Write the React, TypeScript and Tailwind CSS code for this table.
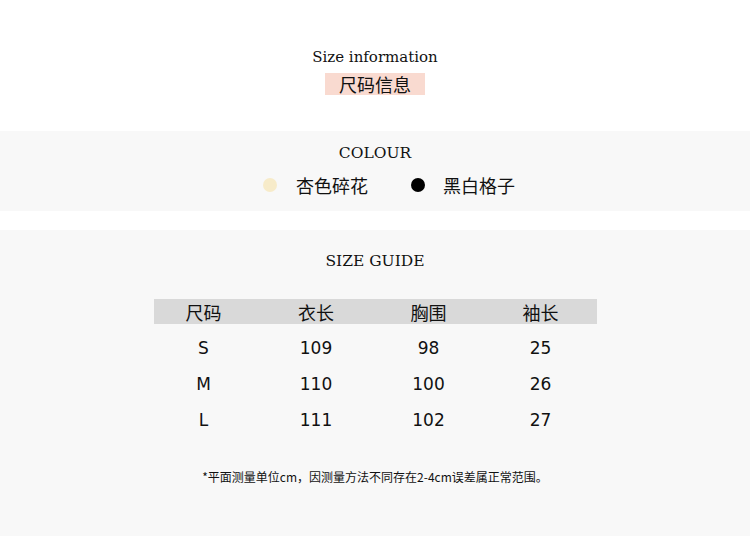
import React from "react";

const cjk = { fontFamily: '"Noto Sans CJK SC", "Noto Sans", sans-serif' };
const num = { fontFamily: '"DejaVu Sans", "Noto Sans CJK SC", sans-serif' };
const serif = { fontFamily: '"DejaVu Serif", "Liberation Serif", serif' };

const cols = "grid grid-cols-[100px_125px_100px_118px] w-[443px] mx-auto";

const rows = [
  ["S", "109", "98", "25"],
  ["M", "110", "100", "26"],
  ["L", "111", "102", "27"],
];

export default function App() {
  return (
    <div className="w-[750px] h-[536px] bg-white text-[#111] overflow-hidden">
      {/* title */}
      <div className="h-[131px] flex flex-col items-center pt-[46px]">
        <div className="text-[15px] leading-[22px]" style={serif}>
          Size information
        </div>
        <div className="mt-[5px] h-[22px] px-[14px] bg-[#f9dad0] flex items-center text-[18px]" style={cjk}>
          尺码信息
        </div>
      </div>

      {/* colour */}
      <div className="h-[80px] bg-[#f8f8f8] flex flex-col items-center pt-[12px]">
        <div className="text-[15.5px] leading-[20px]" style={serif}>
          COLOUR
        </div>
        <div className="mt-[11px] ml-[28px] flex items-center text-[18px] leading-[22px]" style={cjk}>
          <span className="w-[14px] h-[14px] rounded-full bg-[#f7ebc9] mr-[19px]" />
          <span>杏色碎花</span>
          <span className="w-[14px] h-[14px] rounded-full bg-black ml-[43px] mr-[18px]" />
          <span>黑白格子</span>
        </div>
      </div>

      <div className="h-[19px]" />

      {/* size guide */}
      <div className="h-[306px] bg-[#f8f8f8] pt-[20px]">
        <div className="text-center text-[15.5px] leading-[22px]" style={serif}>
          SIZE GUIDE
        </div>
        <div className={`${cols} mt-[27px] h-[25px] bg-[#d9d9d9] items-center text-[18px]`} style={cjk}>
          <div className="text-center">尺码</div>
          <div className="text-center">衣长</div>
          <div className="text-center">胸围</div>
          <div className="text-center pl-[6px]">袖长</div>
        </div>
        <div className="mt-[7px]">
          {rows.map((r) => (
            <div key={r[0]} className={`${cols} h-[36px] items-center text-[17px]`} style={num}>
              {r.map((c, i) => (
                <div key={i} className={`text-center ${i === 3 ? "pl-[6px]" : ""}`}>
                  {c}
                </div>
              ))}
            </div>
          ))}
        </div>
        <div className="mt-[29px] text-center text-[12px]" style={cjk}>
          *平面测量单位cm，因测量方法不同存在2-4cm误差属正常范围。
        </div>
      </div>
    </div>
  );
}
